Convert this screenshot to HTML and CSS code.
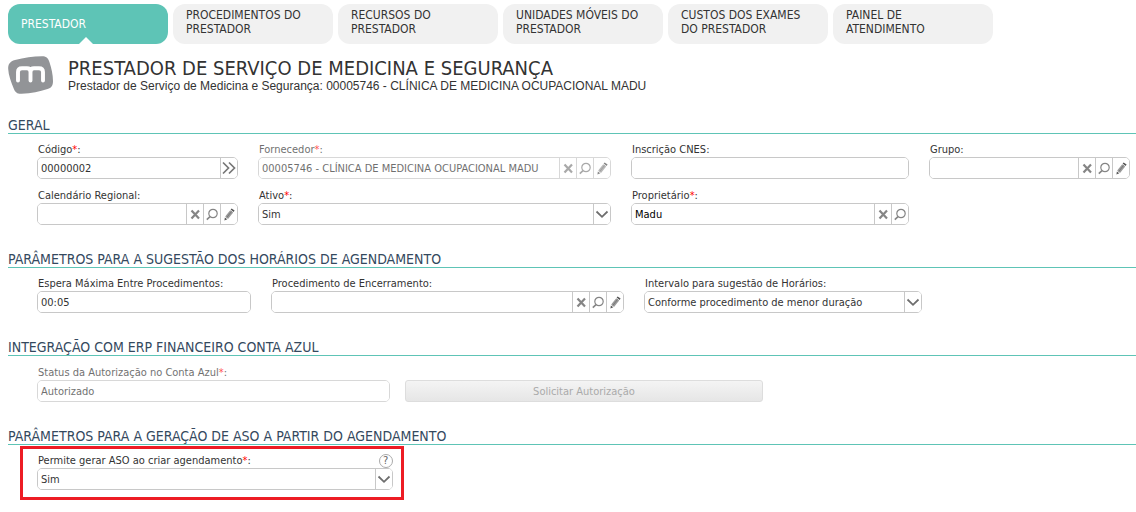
FILE: index.html
```
<!DOCTYPE html>
<html lang="pt-BR">
<head>
<meta charset="utf-8">
<title>Prestador de Serviço de Medicina e Segurança</title>
<link rel="stylesheet" href="styles.css">
</head>
<body>
<svg class="sprite" aria-hidden="true">
  <symbol id="i-clear" viewBox="0 0 16 20"><path d="M4.500 6.500l7.500 8M12 6.500l-7.500 8" fill="none" stroke="#858585" stroke-width="2.2"/></symbol>
  <symbol id="i-search" viewBox="0 0 16 20"><circle cx="9" cy="9.500" r="4.200" fill="none" stroke="#858585" stroke-width="1.2"/><path d="M6 12.700L2.800 15.700" stroke="#858585" stroke-width="1.6"/></symbol>
  <symbol id="i-edit" viewBox="0 0 16 20"><path d="M4.200 12.600l5-6.400 3 2.200-5.200 6.600z" fill="#999"/><path d="M9.600 5.600l1-1.200 3 2.200-1 1.300z" fill="#555"/><path d="M5.800 13.500l4.800-6.200" stroke="#707070" stroke-width=".8"/><path d="M3.900 13.400l2.400 1.900-2.900 1.100z" fill="#555"/></symbol>
  <symbol id="i-down" viewBox="0 0 16 20"><path d="M2.500 7.500L8 12.800l5.500-5.300" fill="none" stroke="#6e6e6e" stroke-width="1.800"/></symbol>
  <symbol id="i-go" viewBox="0 0 16 20"><path d="M2 4.500L7.500 10 2 15.500M8 4.500L13.500 10 8 15.500" fill="none" stroke="#777" stroke-width="1.700"/></symbol>
</svg>

<nav class="tabs">
  <a class="tab tab-active" href="#prestador" aria-current="page">PRESTADOR</a>
  <a class="tab" href="#procedimentos">PROCEDIMENTOS DO PRESTADOR</a>
  <a class="tab" href="#recursos">RECURSOS DO PRESTADOR</a>
  <a class="tab" href="#unidades">UNIDADES MÓVEIS DO PRESTADOR</a>
  <a class="tab" href="#custos">CUSTOS DOS EXAMES DO PRESTADOR</a>
  <a class="tab" href="#painel">PAINEL DE ATENDIMENTO</a>
</nav>

<header class="head">
  <svg class="logo" viewBox="0 0 45 38" role="img" aria-label="Logo">
    <path d="M7 4C16 1.500 25 .3 34 .2c4 0 6 1.500 7.400 5.800C43.500 12 45 19 45 25c0 4.500-1.500 6.800-5.500 8-8 2.800-16 4.300-26 4.800-4 .2-6.300-1.200-7.800-5.300C3 26 .5 19 .2 13 0 8 2 5.500 7 4z" fill="#929497"/>
    <path d="M10 24.500V16Q10 12.200 14 12.200H19Q22.500 12.200 22.500 16V24.500M22.500 16Q22.500 12.200 26 12.200H31Q35 12.200 35 16V24.500" fill="none" stroke="#fff" stroke-width="3.900" stroke-linecap="round" stroke-linejoin="round"/>
  </svg>
  <div>
    <h1 class="title">PRESTADOR DE SERVIÇO DE MEDICINA E SEGURANÇA</h1>
    <p class="subtitle">Prestador de Serviço de Medicina e Segurança: 00005746 - CLÍNICA DE MEDICINA OCUPACIONAL MADU</p>
  </div>
</header>

<form class="form">
  <section class="section">
    <h2 class="section-title">GERAL</h2>
    <div class="fields fields-general">
      <div class="field">
        <label class="label" for="codigo">Código<span class="req">*</span>:</label>
        <div class="control"><input class="input" id="codigo" value="00000002"><button class="action" type="button" aria-label="Avançar"><svg class="icon"><use href="#i-go"/></svg></button></div>
      </div>
      <div class="field field-disabled">
        <label class="label" for="fornecedor">Fornecedor<span class="req">*</span>:</label>
        <div class="control"><input class="input" id="fornecedor" value="00005746 - CLÍNICA DE MEDICINA OCUPACIONAL MADU" disabled><button class="action" type="button" aria-label="Limpar" disabled><svg class="icon"><use href="#i-clear"/></svg></button><button class="action" type="button" aria-label="Pesquisar" disabled><svg class="icon"><use href="#i-search"/></svg></button><button class="action" type="button" aria-label="Editar" disabled><svg class="icon"><use href="#i-edit"/></svg></button></div>
      </div>
      <div class="field">
        <label class="label" for="cnes">Inscrição CNES:</label>
        <div class="control"><input class="input" id="cnes"></div>
      </div>
      <div class="field">
        <label class="label" for="grupo">Grupo:</label>
        <div class="control"><input class="input" id="grupo"><button class="action" type="button" aria-label="Limpar"><svg class="icon"><use href="#i-clear"/></svg></button><button class="action" type="button" aria-label="Pesquisar"><svg class="icon"><use href="#i-search"/></svg></button><button class="action" type="button" aria-label="Editar"><svg class="icon"><use href="#i-edit"/></svg></button></div>
      </div>
      <div class="field">
        <label class="label" for="calendario">Calendário Regional:</label>
        <div class="control"><input class="input" id="calendario"><button class="action" type="button" aria-label="Limpar"><svg class="icon"><use href="#i-clear"/></svg></button><button class="action" type="button" aria-label="Pesquisar"><svg class="icon"><use href="#i-search"/></svg></button><button class="action" type="button" aria-label="Editar"><svg class="icon"><use href="#i-edit"/></svg></button></div>
      </div>
      <div class="field">
        <label class="label" for="ativo">Ativo<span class="req">*</span>:</label>
        <div class="control control-select"><select class="select" id="ativo"><option>Sim</option><option>Não</option></select><span class="arrow"><svg class="icon"><use href="#i-down"/></svg></span></div>
      </div>
      <div class="field">
        <label class="label" for="proprietario">Proprietário<span class="req">*</span>:</label>
        <div class="control"><input class="input input-dark" id="proprietario" value="Madu"><button class="action" type="button" aria-label="Limpar"><svg class="icon"><use href="#i-clear"/></svg></button><button class="action" type="button" aria-label="Pesquisar"><svg class="icon"><use href="#i-search"/></svg></button></div>
      </div>
    </div>
  </section>

  <section class="section">
    <h2 class="section-title">PARÂMETROS PARA A SUGESTÃO DOS HORÁRIOS DE AGENDAMENTO</h2>
    <div class="fields fields-schedule">
      <div class="field">
        <label class="label" for="espera">Espera Máxima Entre Procedimentos:</label>
        <div class="control"><input class="input" id="espera" value="00:05"></div>
      </div>
      <div class="field">
        <label class="label" for="encerramento">Procedimento de Encerramento:</label>
        <div class="control"><input class="input" id="encerramento"><button class="action" type="button" aria-label="Limpar"><svg class="icon"><use href="#i-clear"/></svg></button><button class="action" type="button" aria-label="Pesquisar"><svg class="icon"><use href="#i-search"/></svg></button><button class="action" type="button" aria-label="Editar"><svg class="icon"><use href="#i-edit"/></svg></button></div>
      </div>
      <div class="field">
        <label class="label" for="intervalo">Intervalo para sugestão de Horários:</label>
        <div class="control control-select"><select class="select" id="intervalo"><option>Conforme procedimento de menor duração</option></select><span class="arrow"><svg class="icon"><use href="#i-down"/></svg></span></div>
      </div>
    </div>
  </section>

  <section class="section">
    <h2 class="section-title">INTEGRAÇÃO COM ERP FINANCEIRO CONTA AZUL</h2>
    <div class="fields fields-erp">
      <div class="field field-disabled">
        <label class="label" for="status">Status da Autorização no Conta Azul<span class="req">*</span>:</label>
        <div class="control"><input class="input" id="status" value="Autorizado" disabled></div>
      </div>
      <button class="submit" type="button" disabled>Solicitar Autorização</button>
    </div>
  </section>

  <section class="section">
    <h2 class="section-title">PARÂMETROS PARA A GERAÇÃO DE ASO A PARTIR DO AGENDAMENTO</h2>
    <div class="highlight">
      <div class="field">
        <div class="label-row">
          <label class="label" for="aso">Permite gerar ASO ao criar agendamento<span class="req">*</span>:</label>
          <button class="help" type="button" aria-label="Ajuda">?</button>
        </div>
        <div class="control control-select"><select class="select" id="aso"><option>Sim</option><option>Não</option></select><span class="arrow"><svg class="icon"><use href="#i-down"/></svg></span></div>
      </div>
    </div>
  </section>
</form>
</body>
</html>
```
FILE: styles.css
```
* {
  box-sizing: border-box;
}

body {
  margin: 0;
  padding: 4px 0 0 8px;
  background: #fff;
  color: #333;
  font-family: Tahoma, "DejaVu Sans Condensed", "DejaVu Sans", sans-serif;
  font-size: 11px;
}

.sprite {
  display: none;
}

.tabs {
  display: flex;
  gap: 5px;
}

.tab {
  width: 160px;
  min-height: 40px;
  padding: 4px 12px 8px 13px;
  border-radius: 12px;
  background: #f1f1f1;
  color: #333;
  font-size: 12px;
  line-height: 14px;
  text-decoration: none;
}

.tab-active {
  display: flex;
  align-items: center;
  padding: 0 13px;
  background: #5ec4b6;
  color: #fff;
  position: relative;
}

.tab-active::after {
  content: "";
  position: absolute;
  bottom: 0;
  left: 50%;
  margin-left: -9px;
  border: 7px solid transparent;
  border-top: 0;
  border-bottom-color: #fff;
}

.head {
  display: flex;
  gap: 15px;
  margin-top: 12px;
}

.logo {
  width: 45px;
  height: 38px;
}

.title {
  margin: 0;
  font-size: 20px;
  font-weight: 400;
  line-height: 24px;
}

.subtitle {
  margin: 0;
  font-family: Arial, "Liberation Sans", sans-serif;
  font-size: 12px;
  line-height: 13px;
}

.form {
  margin-top: 23px;
}

.section {
  margin-bottom: 25px;
}

.section-title {
  margin: 0;
  border-bottom: 1px solid #5ec4b6;
  color: #34495e;
  font-size: 14px;
  font-weight: 400;
  line-height: 16px;
}

.fields {
  display: grid;
  gap: 9px 20px;
  padding: 8px 6px 1px 29px;
}

.fields-general {
  grid-template-columns: 201fr 353fr 278fr 201fr;
}

.fields-schedule {
  grid-template-columns: 214fr 353fr 278fr 188fr;
}

.fields-erp {
  grid-template-columns: 353fr 358fr 352fr;
  align-items: end;
  padding-top: 9px;
  column-gap: 15px;
}

.field {
  min-width: 0;
}

.label {
  display: block;
  padding-left: 1px;
  line-height: 15px;
  white-space: nowrap;
}

.req {
  color: #f00;
}

.control {
  display: flex;
  height: 22px;
  border: 1px solid #c8c8c8;
  border-radius: 5px;
  overflow: hidden;
}

.input,
.select {
  flex: 1;
  min-width: 0;
  margin: 0;
  padding: 0 3px;
  border: 0;
  outline: 0;
  background: #fff;
  color: #333;
  font: inherit;
}

.input-dark {
  color: #000;
}

.action,
.arrow {
  flex: none;
  width: 17px;
  height: 20px;
  padding: 0;
  border: 0;
  border-left: 1px solid #c8c8c8;
  background: #fff;
}

.icon {
  display: block;
  width: 16px;
  height: 20px;
}

.control-select {
  display: grid;
  grid-template-columns: 1fr 17px;
}

.select {
  grid-area: 1 / 1 / 2 / 3;
  appearance: none;
}

.arrow {
  grid-area: 1 / 2;
  pointer-events: none;
}

.field-disabled {
  opacity: 0.7;
}

.submit {
  height: 22px;
  padding: 0;
  border: 1px solid #ddd;
  border-radius: 3px;
  background: linear-gradient(#f4f4f4, #e6e6e6);
  color: #aaa;
  font: inherit;
}

.highlight {
  width: 34%;
  margin: 1px 0 0 12px;
  padding: 4px 8px 7px 14px;
  border: 3px solid #ed1c24;
}

.label-row {
  display: flex;
  align-items: center;
  justify-content: space-between;
}

.help {
  width: 14px;
  height: 14px;
  padding: 0;
  border: 1px solid #aaa;
  border-radius: 50%;
  background: #fff;
  color: #666;
  font: inherit;
  line-height: 12px;
}
```
